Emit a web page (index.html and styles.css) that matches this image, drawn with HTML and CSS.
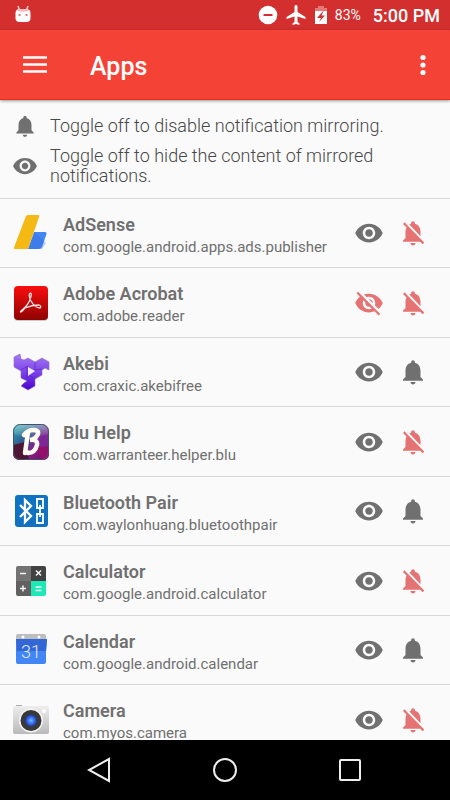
FILE: index.html
```html
<!DOCTYPE html>
<html lang="en">
<head>
<meta charset="utf-8">
<meta name="viewport" content="width=device-width, initial-scale=1">
<title>Apps</title>
<link rel="stylesheet" href="styles.css">
</head>
<body>
<svg class="defs" aria-hidden="true">
  <defs>
    <linearGradient id="acrobat" x1="0" y1="0" x2="0" y2="1"><stop offset="0" stop-color="#fb0d0d"/><stop offset="1" stop-color="#8e0303"/></linearGradient>
    <linearGradient id="akebi" x1="0" y1="0" x2="0" y2="1"><stop offset="0" stop-color="#a678f5"/><stop offset=".5" stop-color="#7c45ea"/><stop offset="1" stop-color="#4a00d0"/></linearGradient>
    <linearGradient id="blu" x1="0" y1="0" x2="1" y2="1"><stop offset="0" stop-color="#22b3ad"/><stop offset=".35" stop-color="#315f94"/><stop offset=".65" stop-color="#8d1b87"/><stop offset="1" stop-color="#641456"/></linearGradient>
    <linearGradient id="gloss" x1="0" y1="0" x2="0" y2="1"><stop offset="0" stop-color="#fff" stop-opacity=".45"/><stop offset="1" stop-color="#fff" stop-opacity=".05"/></linearGradient>
    <linearGradient id="silver" x1="0" y1="0" x2="0" y2="1"><stop offset="0" stop-color="#eeeeee"/><stop offset="1" stop-color="#b9b9b9"/></linearGradient>
    <radialGradient id="lens"><stop offset="0" stop-color="#78bcff"/><stop offset=".5" stop-color="#3976ee"/><stop offset="1" stop-color="#23359c"/></radialGradient>
  </defs>
  <symbol id="eye" viewBox="0 0 24 24"><path d="M12 4.500C7 4.500 2.730 7.610 1 12c1.730 4.390 6 7.500 11 7.500s9.270-3.110 11-7.500c-1.730-4.390-6-7.500-11-7.500zM12 17c-2.760 0-5-2.240-5-5s2.240-5 5-5 5 2.240 5 5-2.240 5-5 5zm0-8c-1.660 0-3 1.340-3 3s1.340 3 3 3 3-1.340 3-3-1.340-3-3-3z"/></symbol>
  <symbol id="eye-off" viewBox="0 0 24 24"><path d="M12 7c2.760 0 5 2.240 5 5 0 .65-.13 1.260-.36 1.830l2.920 2.920c1.510-1.260 2.700-2.890 3.430-4.750-1.730-4.390-6-7.500-11-7.500-1.400 0-2.740.25-3.980.7l2.160 2.160C10.740 7.130 11.350 7 12 7zM2 4.270l2.280 2.280.46.46C3.080 8.300 1.780 10.020 1 12c1.730 4.390 6 7.500 11 7.500 1.550 0 3.030-.3 4.380-.84l.42.42L19.730 22 21 20.730 3.270 3 2 4.270zM7.530 9.800l1.550 1.550c-.05.21-.08.43-.08.65 0 1.660 1.340 3 3 3 .22 0 .44-.03.65-.08l1.550 1.550c-.67.33-1.410.53-2.200.53-2.760 0-5-2.240-5-5 0-.79.2-1.530.53-2.200zm4.310-.78l3.150 3.150.02-.16c0-1.660-1.340-3-3-3l-.17.01z"/></symbol>
  <symbol id="bell" viewBox="0 0 24 24"><path d="M12 22c1.100 0 2-.9 2-2h-4c0 1.100.89 2 2 2zm6-6v-5c0-3.070-1.640-5.640-4.500-6.320V4c0-.83-.67-1.500-1.500-1.500s-1.500.67-1.500 1.500v.68C7.630 5.360 6 7.920 6 11v5l-2 2v1h16v-1l-2-2z"/></symbol>
  <symbol id="bell-off" viewBox="0 0 24 24"><path d="M20 18.690L7.840 6.140 5.270 3.490 4 4.760l2.800 2.800v.01c-.52.99-.8 2.160-.8 3.420v5l-2 2v1h13.730l2 2L21 19.720l-1-1.030zM12 22c1.110 0 2-.89 2-2h-4c0 1.110.89 2 2 2zm6-7.320V11c0-3.080-1.640-5.640-4.500-6.320V4c0-.83-.67-1.500-1.500-1.500s-1.500.67-1.500 1.500v.68c-.39.09-.8.24-1.430.55L18 14.680z"/></symbol>
</svg>
<div class="screen">
  <div class="status">
    <svg class="status-bot" viewBox="0 0 18 20" aria-hidden="true"><path d="M4 1l1.500 4M14 1l-1.500 4" stroke="#f6caca" stroke-width="1.500"/><path d="M1.500 8Q1.500 4 6 4h6q4.500 0 4.500 4v5q0 4-4 4h-7q-4 0-4-4z" fill="#fff"/><path d="M3 6q1-2 3-2h6q2 0 3 2-6 1.500-12 0z" fill="#f3bcbc"/><path d="M4.500 9h2v2h-2zM11.500 9h2v2h-2z" fill="#e27878"/></svg>
    <svg class="status-icon" viewBox="0 0 20 20" aria-label="Do not disturb"><circle cx="10" cy="10" r="9.300" fill="#fff"/><path d="M5.500 9h9v2h-9z" fill="#d32f2f"/></svg>
    <svg class="status-icon" viewBox="2 2 19 20" aria-label="Airplane mode"><path fill="#fff" d="M21 16v-2l-8-5V3.500c0-.83-.67-1.500-1.500-1.500S10 2.670 10 3.500V9l-8 5v2l8-2.500V19l-2 1.500V22l3.500-1 3.500 1v-1.500L13 19v-5.500l8 2.500z"/></svg>
    <svg class="status-battery" viewBox="0 0 14 20" aria-label="Charging"><path d="M4 1h6v2h3v3H1V3h3z" fill="#e57878"/><path d="M1 6h12v13H1z" fill="#fff"/><path d="M10 5l-7 8h4l-2 4 6-6.500H7.500z" fill="#d32f2f"/></svg>
    <span class="percent">83%</span>
    <span class="clock">5:00 PM</span>
  </div>
  <header class="toolbar">
    <button class="tool" aria-label="Open menu"><svg viewBox="0 0 24 18"><path d="M0 .2h24v2.600H0zM0 7.200h24v2.600H0zM0 14.200h24v2.600H0z"/></svg></button>
    <h1>Apps</h1>
    <button class="tool more" aria-label="More options"><svg viewBox="0 0 6 22"><circle cx="3" cy="3.500" r="2.600"/><circle cx="3" cy="11" r="2.600"/><circle cx="3" cy="18.500" r="2.600"/></svg></button>
  </header>
  <main class="content">
    <section class="help">
      <svg class="help-icon"><use href="#bell"/></svg><p>Toggle off to disable notification mirroring.</p>
      <svg class="help-icon"><use href="#eye"/></svg><p>Toggle off to hide the content of mirrored notifications.</p>
    </section>
    <ul class="apps">
      <li class="app">
        <svg class="logo" viewBox="0 0 38 38"><path d="M22 18h11q2 0 1.500 2l-4.500 13q-1 2-3 2H16z" fill="#4285f4"/><path d="M23 18l11 11-4 6H16z" fill="#356bd0" opacity=".3"/><path d="M14 2q1-1 2-1h10q2 0 1 2L16 35H3q-1.500 0-1-1.500z" fill="#f4b912"/></svg>
        <div class="info"><h2>AdSense</h2><p>com.google.android.apps.ads.publisher</p></div>
        <button class="toggle" aria-label="Content"><svg><use href="#eye"/></svg></button><button class="toggle off" aria-label="Notifications"><svg><use href="#bell-off"/></svg></button>
      </li>
      <li class="app">
        <svg class="logo" viewBox="0 0 38 38"><rect x="2" y="3" width="34" height="34" rx="4" fill="#aaa" opacity=".6"/><rect x="2" y="2" width="34" height="34" rx="4" fill="url(#acrobat)"/><path d="M18 9q2 0 .8 4Q17 21 9 27q-1 1 0 1 2-1 4-4 7-3 14-3 3 1 1 3-5 0-9-7-3-6-1-8" fill="none" stroke="#ffe5e5" stroke-width="1.300"/></svg>
        <div class="info"><h2>Adobe Acrobat</h2><p>com.adobe.reader</p></div>
        <button class="toggle off" aria-label="Content"><svg><use href="#eye-off"/></svg></button><button class="toggle off" aria-label="Notifications"><svg><use href="#bell-off"/></svg></button>
      </li>
      <li class="app">
        <svg class="logo" viewBox="0 0 38 38"><path d="M2 4l6-3 1 5 3 1 4-2 7 4 7-4 7 4v8l-4-2-3 2v5l-7 4v7l-7 4-7-4 3-3 3-2-6-3v-7l-7-4z" fill="url(#akebi)" stroke="#8a6bc0" stroke-width=".6"/><path d="M15 13v12M23 9v8M23 26l-7-4M9 17l7-4M23 17l7-1" fill="none" stroke="#4d1fa5" stroke-width=".8" opacity=".7"/><path d="M16 14l7 4-7 5z" fill="#f2eaff"/></svg>
        <div class="info"><h2>Akebi</h2><p>com.craxic.akebifree</p></div>
        <button class="toggle" aria-label="Content"><svg><use href="#eye"/></svg></button><button class="toggle" aria-label="Notifications"><svg><use href="#bell"/></svg></button>
      </li>
      <li class="app">
        <svg class="logo" viewBox="0 0 38 38"><rect x="1" y="1" width="36" height="36" rx="7" fill="url(#blu)"/><path d="M1 22l12-3 4 18H8q-7 0-7-7z" fill="#4f1534"/><path d="M26 12l11-4v15l-14 1z" fill="#7c2795"/><path d="M23 24h14v7q0 6-7 6z" fill="#94106b"/><path d="M1 8q0-7 7-7h22q7 0 7 7v3Q19 17 1 11z" fill="url(#gloss)"/><rect x="1.500" y="1.500" width="35" height="35" rx="7" fill="none" stroke="#435469"/><path d="M16 9l-3 21M12 12q4-5 9-5 6 0 5 4-2 5-8 6 8-1 7 5-2 8-9 8l-2-2" fill="none" stroke="#fffdf0" stroke-width="4.500" stroke-linecap="round"/></svg>
        <div class="info"><h2>Blu Help</h2><p>com.warranteer.helper.blu</p></div>
        <button class="toggle" aria-label="Content"><svg><use href="#eye"/></svg></button><button class="toggle off" aria-label="Notifications"><svg><use href="#bell-off"/></svg></button>
      </li>
      <li class="app">
        <svg class="logo" viewBox="0 0 38 38"><rect x="3" y="3" width="33" height="32" rx="3" fill="#1073c2"/><path d="M8 13l11 11-6 6V8l6 6L8 25" fill="none" stroke="#fff" stroke-width="2.300"/><path d="M25 7h6v9h-6zM25 22h6v9h-6zM28 13v12" fill="none" stroke="#fff" stroke-width="1.800"/></svg>
        <div class="info"><h2>Bluetooth Pair</h2><p>com.waylonhuang.bluetoothpair</p></div>
        <button class="toggle" aria-label="Content"><svg><use href="#eye"/></svg></button><button class="toggle" aria-label="Notifications"><svg><use href="#bell"/></svg></button>
      </li>
      <li class="app">
        <svg class="logo" viewBox="0 0 38 38"><path d="M19 4h13q2 0 2 2v13H19z" fill="#424242"/><path d="M6 4h13v15H4V6q0-2 2-2z" fill="#737373"/><path d="M4 19h15v15H6q-2 0-2-2z" fill="#616161"/><path d="M19 19h15v13q0 2-2 2H19z" fill="#1de9b6"/><path d="M8 11.500h6M24 8.500l5 5M29 8.500l-5 5M8 26.500h6M11 23.500v6M23.500 25h6M23.500 28.500h6" stroke="#f4f4f4" stroke-width="1.500"/></svg>
        <div class="info"><h2>Calculator</h2><p>com.google.android.calculator</p></div>
        <button class="toggle" aria-label="Content"><svg><use href="#eye"/></svg></button><button class="toggle off" aria-label="Notifications"><svg><use href="#bell-off"/></svg></button>
      </li>
      <li class="app">
        <svg class="logo" viewBox="0 0 38 38"><path d="M4 9V5q0-2 2-2h26q2 0 2 2v4z" fill="#bdbdbd"/><circle cx="11" cy="6" r="1.500" fill="#fff"/><circle cx="27" cy="6" r="1.500" fill="#fff"/><path d="M4 8h31l-1 13v10q0 2-2 2H6q-2 0-2-2V21z" fill="#4285f4"/><path d="M4 8h31l-1 12H5z" fill="#3367d6"/><text class="day" x="19" y="27" text-anchor="middle">31</text></svg>
        <div class="info"><h2>Calendar</h2><p>com.google.android.calendar</p></div>
        <button class="toggle" aria-label="Content"><svg><use href="#eye"/></svg></button><button class="toggle" aria-label="Notifications"><svg><use href="#bell"/></svg></button>
      </li>
      <li class="app">
        <svg class="logo" viewBox="0 0 38 38"><path d="M4 4h6v2H4z" fill="#aaa"/><rect x="1" y="5" width="36" height="28" rx="2" fill="url(#silver)"/><circle cx="19" cy="19.500" r="12" fill="#f5f5f5"/><circle cx="19" cy="19.500" r="10.500" fill="#393939"/><circle cx="19" cy="19.500" r="6" fill="url(#lens)"/><circle cx="32" cy="10" r="2" fill="#fff"/></svg>
        <div class="info"><h2>Camera</h2><p>com.myos.camera</p></div>
        <button class="toggle" aria-label="Content"><svg><use href="#eye"/></svg></button><button class="toggle off" aria-label="Notifications"><svg><use href="#bell-off"/></svg></button>
      </li>
    </ul>
  </main>
  <nav class="navbar">
    <button aria-label="Back"><svg viewBox="0 0 26 26"><path d="M22 2v22L2 13z"/></svg></button>
    <button aria-label="Home"><svg viewBox="0 0 26 26"><circle cx="13" cy="13" r="11"/></svg></button>
    <button aria-label="Recent apps"><svg viewBox="0 0 26 26"><rect x="3" y="3" width="20" height="20" rx="1"/></svg></button>
  </nav>
</div>
</body>
</html>
```

FILE: styles.css
```css
* { box-sizing: border-box; margin: 0; padding: 0; }
body { font-family: Roboto, sans-serif; color: #707070; background: #fafafa; }
button { border: 0; background: none; color: inherit; display: block; }
svg { display: block; flex: none; fill: currentColor; }
.defs { position: absolute; width: 0; height: 0; }
.screen { height: 100vh; display: flex; flex-direction: column; overflow: hidden; }

.status { flex: none; height: 30px; padding: 0 10px 0 14px; display: flex; align-items: center; background: #d32f2f; color: #fff; }
.status-bot { width: 18px; height: 20px; margin-right: auto; }
.status-icon { width: 20px; height: 20px; margin-right: 8px; }
.status-battery { width: 14px; height: 20px; margin-right: 7px; }
.percent { font-size: 14px; margin-right: 12px; }
.clock { font-size: 18px; font-weight: 500; }

.toolbar { flex: none; height: 70px; padding: 0 24px 0 23px; display: flex; align-items: center; background: #f44336; color: #fff; border-bottom: 1px solid #e8291c; box-shadow: 0 1px 3px rgba(0, 0, 0, .4); position: relative; }
.tool svg { width: 24px; height: 18px; }
.tool.more svg { width: 6px; height: 22px; }
.toolbar h1 { flex: 1; margin-left: 43px; padding-top: 4px; font-size: 25px; font-weight: 500; line-height: 30px; }

.content { flex: 1; min-height: 0; overflow: hidden; }
.help { display: grid; grid-template-columns: 26px 1fr; column-gap: 12px; row-gap: 10px; align-items: center; padding: 16px 40px 12px 12px; border-bottom: 1px solid #d9d9d9; font-size: 18px; font-weight: 300; line-height: 20px; }
.help p { color: #484848; }
.help-icon { width: 26px; height: 26px; margin: -3px 0; }

.apps { list-style: none; }
.app { height: 69px; padding: 0 22px 0 12px; display: flex; align-items: center; border-bottom: 1px solid #d9d9d9; }
.app:nth-child(even) { height: 70px; }
.logo { width: 38px; height: 38px; margin-right: 13px; }
.info { flex: 1; min-width: 0; padding-top: 5px; }
.info h2 { font-size: 18px; font-weight: 600; line-height: 22px; }
.info p { font-size: 15px; line-height: 22px; }
.toggle { margin-left: 14px; }
.toggle svg { width: 30px; height: 30px; }
.off { color: #e57373; }
.day { font-size: 18px; font-weight: 300; fill: #e3ecff; }

.navbar { flex: none; height: 60px; padding: 0 37px; display: flex; justify-content: space-around; align-items: center; background: #000; }
.navbar svg { width: 26px; height: 26px; fill: none; stroke: #eee; stroke-width: 2; }
```
